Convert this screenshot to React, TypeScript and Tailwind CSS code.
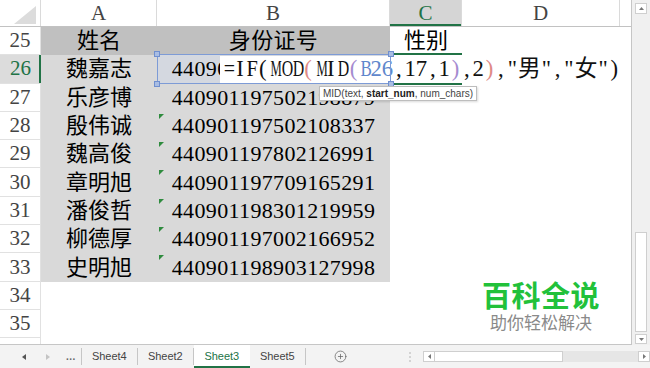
import { CirclePlus } from "lucide-react";

interface Row {
  n: number;
  name?: string;
  id?: string;
  sex?: string;
  head?: boolean;
  mark?: boolean;
}

const rows: Row[] = [
  { n: 25, name: "姓名", id: "身份证号", sex: "性别", head: true },
  { n: 26, name: "魏嘉志", id: "440901197403125613" },
  { n: 27, name: "乐彦博", id: "440901197502198879" },
  { n: 28, name: "殷伟诚", id: "440901197502108337", mark: true },
  { n: 29, name: "魏高俊", id: "440901197802126991", mark: true },
  { n: 30, name: "章明旭", id: "440901197709165291", mark: true },
  { n: 31, name: "潘俊哲", id: "440901198301219959", mark: true },
  { n: 32, name: "柳德厚", id: "440901197002166952", mark: true },
  { n: 33, name: "史明旭", id: "440901198903127998", mark: true },
  { n: 34 },
  { n: 35 },
  { n: 36 },
];

// formula pieces, coloured the way Excel colours nested parens / refs
const formula = [
  { t: "=IF(MOD", c: "text-[#111]" },
  { t: "(", c: "text-[#e08a86]" },
  { t: "MID", c: "text-[#111]" },
  { t: "(", c: "text-[#a58bd0]" },
  { t: "B26", c: "text-[#5f87cc]" },
  { t: ",17,1", c: "text-[#111]" },
  { t: ")", c: "text-[#a58bd0]" },
  { t: ",2", c: "text-[#111]" },
  { t: ")", c: "text-[#e08a86]" },
  { t: ',"男","女")', c: "text-[#111]" },
];

// squeeze wide latin glyphs into a half-em cell, like SimSun does
const squeeze: Record<string, string> = {
  M: "scale-x-[0.56]",
  O: "scale-x-[0.7]",
  D: "scale-x-[0.7]",
  B: "scale-x-[0.75]",
  F: "scale-x-[0.9]",
  "=": "scale-x-[0.88]",
};

function Mono({ text, className }: { text: string; className: string }) {
  return (
    <>
      {Array.from(text).map((ch, i) => (
        <span
          key={i}
          className={`inline-block text-center ${ch.charCodeAt(0) > 255 ? "w-[1em]" : "w-[0.5em]"} ${squeeze[ch] ?? ""} ${className}`}
        >
          {ch}
        </span>
      ))}
    </>
  );
}

function Handle({ className }: { className: string }) {
  return <div className={`absolute w-[6px] h-[6px] bg-[#a9bde3] border border-[#6f8fcf] ${className}`} />;
}

function SheetGrid() {
  return (
    <div className="relative w-[632px] h-full overflow-hidden border-r border-b border-[#c6c6c6]">
      {/* column header */}
      <div className="grid grid-cols-[41px_116px_233px_72px_158px] h-[27px] border-b border-[#c2c2c2] text-[21px] text-[#444] leading-none">
        <div className="relative border-r border-[#dadada]">
          <svg className="absolute left-[14px] top-[6px]" width="22" height="18" viewBox="0 0 22 18">
            <polygon points="22,0 22,18 0,18" fill="#dcdcdc" />
          </svg>
        </div>
        <div className="flex items-center justify-center border-r border-[#dadada]">A</div>
        <div className="flex items-center justify-center border-r border-[#dadada]">B</div>
        <div className="flex items-center justify-center border-r border-[#dadada] bg-[#d5d5d5] text-[#217346] shadow-[inset_0_-2px_0_#217346]">
          C
        </div>
        <div className="flex items-center justify-center border-r border-[#dadada]">D</div>
      </div>

      {/* body rows */}
      {rows.map((r) => {
        const active = r.n === 26;
        const fill = r.head ? "bg-[#c0c0c0]" : r.name ? "bg-[#d9d9d9]" : "bg-white";
        return (
          <div key={r.n} className="grid grid-cols-[41px_116px_233px_72px_158px] h-[28.3px] leading-none">
            <div
              className={`flex items-center justify-center text-[21px] border-b border-[#e1e1e1] ${
                active
                  ? "bg-[#dcdcdc] text-[#217346] shadow-[inset_-2px_0_0_#217346]"
                  : "text-[#444] border-r border-[#c6c6c6]"
              }`}
            >
              {r.n}
            </div>
            <div className={`flex items-center justify-center text-[22px] ${fill}`}>{r.name}</div>
            <div className={`relative flex items-center justify-center text-[22px] tracking-[0.35px] ${active ? "bg-[#d4d8e0]" : fill}`}>
              {r.mark && (
                <div className="absolute left-[2px] top-[2px] w-0 h-0 border-t-[5px] border-r-[5px] border-t-[#2e8b3e] border-r-transparent" />
              )}
              {r.id}
            </div>
            <div className="flex items-center justify-center text-[22px]">{r.sex}</div>
            <div />
          </div>
        );
      })}

      {/* in-cell edit of C26, centred so it spills left over B26 */}
      <div className="absolute left-[220px] top-[56px] w-[410px] h-[27px] bg-white z-10 flex items-center pl-[3px] text-[22.7px] leading-none whitespace-nowrap">
        {formula.map((f, i) => (
          <Mono key={i} text={f.t} className={f.c} />
        ))}
      </div>

      {/* active cell edges */}
      <div className="absolute left-[390px] top-[53px] w-[72px] h-[2px] bg-[#217346] z-20" />
      <div className="absolute left-[390px] top-[83px] w-[72px] h-[2px] bg-[#217346] z-20" />

      {/* B26 reference highlight */}
      <div className="absolute left-[157px] top-[54px] w-[234px] h-[30px] border border-[#7d9bd6] z-20">
        <Handle className="-left-[4px] -top-[4px]" />
        <Handle className="-left-[4px] -bottom-[4px]" />
        <Handle className="-right-[4px] -top-[4px]" />
        <Handle className="-right-[4px] -bottom-[4px]" />
      </div>

      {/* argument tooltip */}
      <div className="absolute left-[319px] top-[86px] h-[15px] px-[3px] flex items-center bg-white border border-[#bdbdbd] shadow-[1px_1px_2px_rgba(0,0,0,0.15)] z-30 font-['Liberation_Sans',sans-serif] text-[10px] text-[#444] whitespace-nowrap">
        MID(text,&nbsp;<b className="text-[#222]">start_num</b>, num_chars)
      </div>

      {/* watermark */}
      <div className="absolute left-[482px] top-[280px] flex flex-col items-center font-['Noto_Sans_CJK_SC',sans-serif] leading-none z-30">
        <span className="text-[29px] font-bold text-[#22c13a] tracking-[0.5px]">百科全说</span>
        <span className="mt-[4px] text-[17px] text-[#8a8a8a]">助你轻松解决</span>
      </div>
    </div>
  );
}

function VScroll() {
  return (
    <div className="w-[18px] h-full bg-[#f0f0f0] flex flex-col items-center pt-[3px] pb-[1px]">
      <div className="w-[12px] h-[11px] bg-white border border-[#cfcfcf] flex items-center justify-center">
        <svg width="5" height="3" viewBox="0 0 5 3">
          <polygon points="2.5,0 5,3 0,3" fill="#777" />
        </svg>
      </div>
      <div className="flex-1" />
      <div className="w-[12px] h-[100px] bg-white border border-[#cfcfcf]" />
      <div className="mt-[2px] w-[12px] h-[10px] bg-white border border-[#cfcfcf] flex items-center justify-center">
        <svg width="5" height="3" viewBox="0 0 5 3">
          <polygon points="0,0 5,0 2.5,3" fill="#777" />
        </svg>
      </div>
    </div>
  );
}

function TabBar() {
  const tabs = ["Sheet4", "Sheet2", "Sheet3", "Sheet5"];
  return (
    <div className="h-[23px] bg-[#f3f3f3] flex items-stretch font-['Liberation_Sans',sans-serif] text-[11px] text-[#444]">
      <div className="w-[83px] flex items-center">
        <svg className="ml-[22px]" width="4" height="6" viewBox="0 0 4 6">
          <polygon points="4,0 4,6 0,3" fill="#555" />
        </svg>
        <svg className="ml-[20px]" width="4" height="6" viewBox="0 0 4 6">
          <polygon points="0,0 4,3 0,6" fill="#c4c4c4" />
        </svg>
        <span className="ml-[16px] text-[10px] font-bold text-[#666] tracking-[0.5px] leading-none">...</span>
      </div>
      <div className="flex items-stretch border-l border-[#c6c6c6] my-[3px]">
        {tabs.map((t) => {
          const on = t === "Sheet3";
          return (
            <div
              key={t}
              className={`w-[56px] flex items-center justify-center ${
                on
                  ? "-my-[3px] bg-white text-[#217346] shadow-[inset_0_-2px_0_#217346]"
                  : "border-r border-[#c6c6c6]"
              }`}
            >
              {t}
            </div>
          );
        })}
      </div>
      <div className="w-[68px] flex items-center justify-center pl-[1px]">
        <CirclePlus size={13} strokeWidth={1.4} className="text-[#666] ml-[2px]" />
      </div>
      <div className="w-[52px] flex items-center justify-end pr-[12px]">
        <svg width="2" height="10" viewBox="0 0 2 10">
          <circle cx="1" cy="1" r="0.8" fill="#aaa" />
          <circle cx="1" cy="5" r="0.8" fill="#aaa" />
          <circle cx="1" cy="9" r="0.8" fill="#aaa" />
        </svg>
      </div>
      <div className="flex items-center">
        <div className="flex h-[11px] w-[227px] bg-[#e6e6e6]">
          <div className="w-[12px] bg-white border border-[#cfcfcf] flex items-center justify-center">
            <svg width="3" height="5" viewBox="0 0 3 5">
              <polygon points="3,0 3,5 0,2.5" fill="#777" />
            </svg>
          </div>
          <div className="w-[128px] bg-white border-y border-r border-[#cfcfcf]" />
          <div className="flex-1" />
          <div className="w-[12px] bg-white border border-[#cfcfcf] flex items-center justify-center">
            <svg width="3" height="5" viewBox="0 0 3 5">
              <polygon points="0,0 3,2.5 0,5" fill="#777" />
            </svg>
          </div>
        </div>
      </div>
    </div>
  );
}

export default function App() {
  return (
    <div className="w-[650px] h-[368px] overflow-hidden bg-white text-black font-['Liberation_Serif','Noto_Sans_CJK_SC',serif]">
      <div className="flex h-[345px]">
        <SheetGrid />
        <VScroll />
      </div>
      <TabBar />
    </div>
  );
}
